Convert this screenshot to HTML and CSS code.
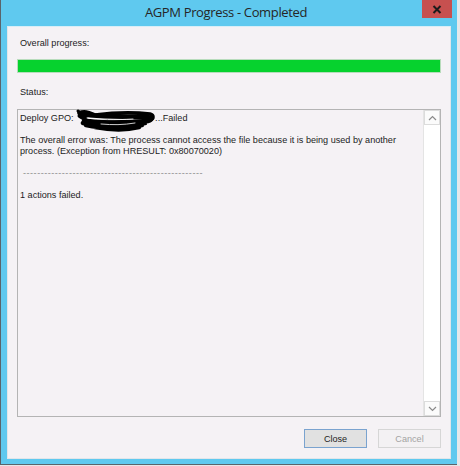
FILE: index.html
```html
<!DOCTYPE html>
<html>
<head>
<meta charset="utf-8">
<link rel="stylesheet" href="styles.css">
</head>
<body>
<div class="window">
  <div class="titlebar">
    <div class="title">AGPM Progress - Completed</div>
    <div class="close-btn">
      <svg width="10" height="9" viewBox="0 0 10 9"><path d="M1.5 1 L8.5 8 M8.5 1 L1.5 8" stroke="#1b1b1b" stroke-width="2"/></svg>
    </div>
  </div>
  <div class="client">
    <div class="label label-progress">Overall progress:</div>
    <div class="progress"><div class="progress-fill"></div></div>
    <div class="label label-status">Status:</div>
    <div class="textbox">
      <div class="text">
        <div class="line">Deploy GPO: <span class="redacted"><svg class="scribble" width="82" height="24" viewBox="0 0 82 24"><path d="M5 6 C20 9 46 9 73 9 C77 10 77 12 73 13 C55 15 30 14 9 13 M8 15 C25 18 50 18 70 15 M11 17 C30 21 52 20 67 17 M20 19 C36 22 52 22 64 19" fill="none" stroke="#000" stroke-width="4.6" stroke-linecap="round"/><path d="M4 5 C10 2 15 5 20 7 C36 5 56 4 75 6 C79 7 79 11 75 12" fill="none" stroke="#000" stroke-width="3.6" stroke-linecap="round"/><path d="M3 3 L11 10 M4 8 C10 13 22 15 32 13" fill="none" stroke="#000" stroke-width="3" stroke-linecap="round"/><path d="M12 10 C24 12 40 12 58 11 M26 16 C38 17 48 17 60 15" fill="none" stroke="#fff" stroke-width="0.8" stroke-linecap="round"/></svg></span>...Failed</div>
        <div class="line">&nbsp;</div>
        <div class="line">The overall error was: The process cannot access the file because it is being used by another</div>
        <div class="line">process. (Exception from HRESULT: 0x80070020)</div>
        <div class="line">&nbsp;</div>
        <div class="line dashes">&nbsp;---------------------------------------------------</div>
        <div class="line">&nbsp;</div>
        <div class="line">1 actions failed.</div>
      </div>
      <div class="scrollbar">
        <div class="sb-btn"><svg width="9" height="6" viewBox="0 0 9 6"><path d="M1 5 L4.5 1.5 L8 5" fill="none" stroke="#8a8a8a" stroke-width="1.2"/></svg></div>
        <div class="sb-track"></div>
        <div class="sb-btn"><svg width="9" height="6" viewBox="0 0 9 6"><path d="M1 1 L4.5 4.5 L8 1" fill="none" stroke="#8a8a8a" stroke-width="1.2"/></svg></div>
      </div>
    </div>
    <div class="buttons">
      <div class="btn btn-default">Close</div>
      <div class="btn btn-disabled">Cancel</div>
    </div>
  </div>
</div>
</body>
</html>
```

FILE: styles.css
```css
html, body {
  margin: 0;
  padding: 0;
}
body {
  width: 460px;
  height: 466px;
  background: #e6e8ea;
  font-family: "Liberation Sans", Arial, sans-serif;
  overflow: hidden;
}
.window {
  width: 457px;
  height: 465px;
  box-sizing: border-box;
  background: #5fc9ef;
  border-left: 1px solid #5a646b;
  border-bottom: 1px solid #5a646b;
  display: flex;
  flex-direction: column;
  padding: 0 6px 5px 6px;
}
.titlebar {
  height: 26px;
  flex: none;
  display: flex;
  align-items: center;
  justify-content: center;
  position: relative;
}
.title {
  font-family: "Open Sans", "Noto Sans", sans-serif;
  font-size: 13px;
  letter-spacing: -0.35px;
  color: #262626;
  margin-top: -2px;
  margin-left: -6px;
}
.close-btn {
  position: absolute;
  top: 0;
  right: -1px;
  width: 30px;
  height: 18px;
  background: #c7504f;
  display: flex;
  align-items: center;
  justify-content: center;
}
.client {
  flex: 1;
  background: #f5f2f5;
  border: 1px solid #e2e6ea;
  border-top: 1px solid #d8eef7;
  display: flex;
  flex-direction: column;
  padding: 0 9px 0 9px;
  font-size: 9.1px;
  color: #1c1c1c;
}
.label {
  padding-left: 3px;
  height: 11px;
  line-height: 11px;
}
.label-progress {
  margin-top: 11px;
}
.progress {
  margin-top: 10px;
  height: 14px;
  box-sizing: border-box;
  border: 1px solid #b8dcbc;
  background: #06d22e;
}
.label-status {
  margin-top: 14px;
}
.textbox {
  margin-top: 11px;
  height: 308px;
  box-sizing: border-box;
  border: 1px solid #b4b4b4;
  display: flex;
  background: #f5f2f5;
}
.text {
  flex: 1;
  padding: 3px 2px;
  line-height: 11px;
}
.line {
  white-space: nowrap;
  height: 11px;
}
.dashes {
  color: #8c8c8c;
  letter-spacing: 0.5px;
}
.redacted {
  display: inline-block;
  width: 79px;
  height: 11px;
  position: relative;
  vertical-align: top;
}
.scribble {
  position: absolute;
  left: -1px;
  top: -5px;
}
.scrollbar {
  width: 16px;
  background: #ffffff;
  display: flex;
  flex-direction: column;
  border-left: 1px solid #e4e4e4;
}
.sb-btn {
  height: 15px;
  box-sizing: border-box;
  border: 1px solid #dcdcdc;
  display: flex;
  align-items: center;
  justify-content: center;
  background: #fbfbfb;
}
.sb-track {
  flex: 1;
}
.buttons {
  margin-top: 12px;
  display: flex;
  justify-content: flex-end;
  gap: 11px;
}
.btn {
  width: 63px;
  height: 19px;
  box-sizing: border-box;
  display: flex;
  align-items: center;
  justify-content: center;
  font-size: 9.1px;
}
.btn-default {
  background: #e1e1e1;
  border: 1px solid #7aa3cf;
  color: #1c1c1c;
}
.btn-disabled {
  background: #f3f1f3;
  border: 1px solid #d6d6d6;
  color: #a3a3a3;
}
```
